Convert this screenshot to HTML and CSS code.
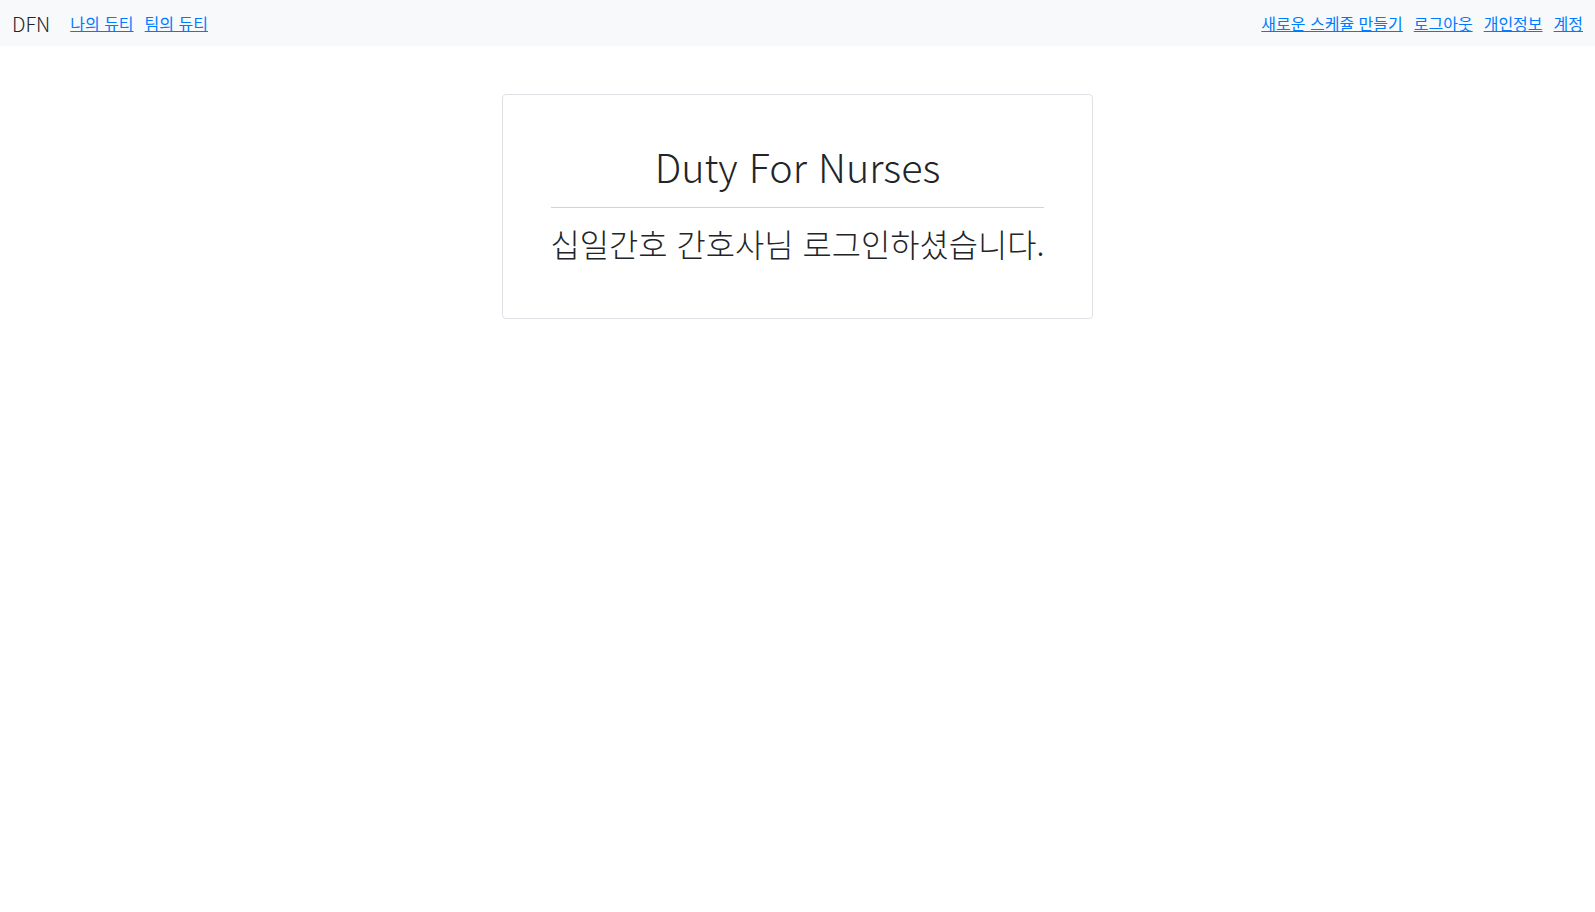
FILE: index.html
```html
<!DOCTYPE html>
<html lang="ko">
<head>
<meta charset="utf-8">
<title>DFN</title>
<link rel="stylesheet" href="styles.css">
</head>
<body>
<nav class="navbar">
  <div class="nav-left">
    <span class="brand">DFN</span>
    <a class="nav-link" href="#">나의 듀티</a>
    <a class="nav-link" href="#">팀의 듀티</a>
  </div>
  <div class="nav-right">
    <a class="nav-link" href="#">새로운 스케쥴 만들기</a>
    <a class="nav-link" href="#">로그아웃</a>
    <a class="nav-link" href="#">개인정보</a>
    <a class="nav-link" href="#">계정</a>
  </div>
</nav>
<main class="main">
  <section class="card">
    <h1 class="title">Duty For Nurses</h1>
    <hr class="divider">
    <p class="welcome">십일간호 간호사님 로그인하셨습니다.</p>
  </section>
</main>
</body>
</html>
```

FILE: styles.css
```css
html, body {
  margin: 0;
  padding: 0;
}
body {
  font-family: "Noto Sans CJK KR", "Noto Sans", sans-serif;
  color: #212529;
  background: #fff;
}
.navbar {
  height: 46px;
  background: #f8f9fa;
  display: flex;
  align-items: center;
  justify-content: space-between;
  padding: 0 12px;
  box-sizing: border-box;
}
.nav-left, .nav-right {
  display: flex;
  align-items: center;
  gap: 11px;
}
.brand {
  font-size: 20px;
  font-weight: 300;
  margin-right: 9px;
  color: #212529;
}
.nav-link {
  font-size: 16px;
  color: #007bff;
  text-decoration: underline;
}
.main {
  display: flex;
  justify-content: center;
  padding-top: 48px;
}
.card {
  border: 1px solid #dee2e6;
  border-radius: 4px;
  padding: 47px 48px 56px;
  text-align: center;
}
.title {
  margin: 0;
  font-size: 39.5px;
  font-weight: 300;
  line-height: 48px;
}
.divider {
  border: 0;
  border-top: 1px solid #ced4da;
  margin: 17px 0 16px;
}
.welcome {
  margin: 0;
  font-size: 31.8px;
  font-weight: 300;
  line-height: 38.4px;
}
```
